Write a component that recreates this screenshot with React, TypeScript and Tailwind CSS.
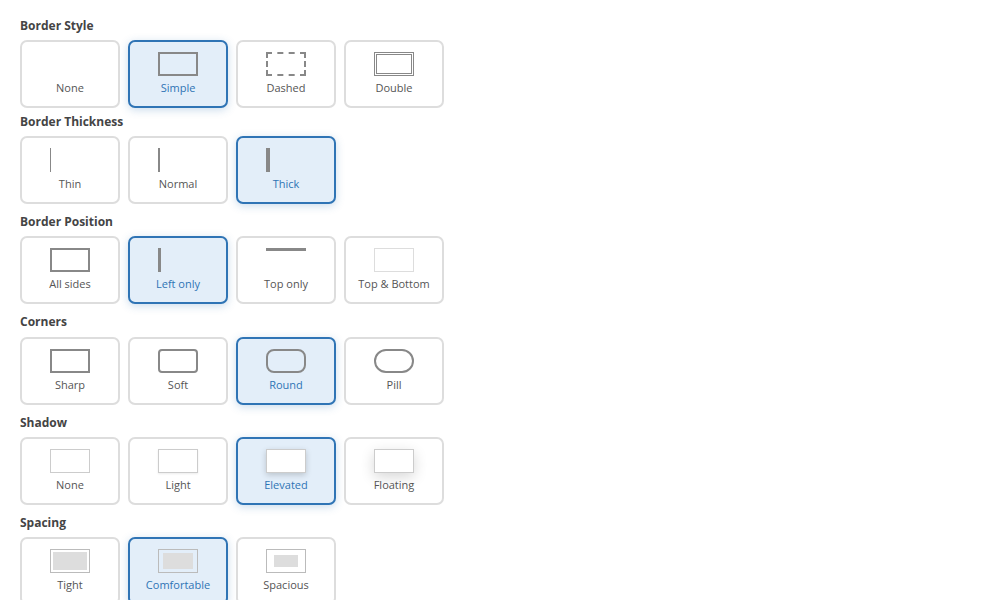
import React from "react";

type Opt = { label: string; icon: React.ReactNode; selected?: boolean };

const box = "w-[40px] h-[24px] box-border";

function Card({ o }: { o: Opt }) {
  return (
    <div
      className={
        "w-[100px] h-[68px] box-border rounded-[7px] border-2 flex flex-col items-center pt-[10px] " +
        (o.selected
          ? "border-[#2f74b5] bg-[#e3eef9] shadow-[0_2px_9px_rgba(47,116,181,0.25)]"
          : "border-[#dddddd] bg-white")
      }
    >
      <div className="w-[40px] h-[24px] flex">{o.icon}</div>
      <div
        className={
          "mt-[4px] text-[11px] leading-[16px] " +
          (o.selected ? "text-[#2f74b5]" : "text-[#555555]")
        }
      >
        {o.label}
      </div>
    </div>
  );
}

function Section({
  title,
  opts,
  className,
  gapClass,
}: {
  title: string;
  opts: Opt[];
  className: string;
  gapClass: string;
}) {
  return (
    <div className={className}>
      <div className="text-[12px] leading-[16px] font-bold text-[#444444]">{title}</div>
      <div className={gapClass + " flex gap-[8px]"}>
        {opts.map((o) => (
          <Card key={o.label} o={o} />
        ))}
      </div>
    </div>
  );
}

export default function App() {
  const sections: { title: string; opts: Opt[] }[] = [
    {
      title: "Border Style",
      opts: [
        { label: "None", icon: <div className={box} /> },
        { label: "Simple", selected: true, icon: <div className={box + " border-2 border-[#888888]"} /> },
        { label: "Dashed", icon: <div className={box + " border-2 border-dashed border-[#888888]"} /> },
        { label: "Double", icon: <div className={box + " border-[3px] border-double border-[#888888]"} /> },
      ],
    },
    {
      title: "Border Thickness",
      opts: [
        { label: "Thin", icon: <div className="w-[1px] h-[24px] bg-[#888888]" /> },
        { label: "Normal", icon: <div className="w-[2px] h-[24px] bg-[#888888]" /> },
        { label: "Thick", selected: true, icon: <div className="w-[4px] h-[24px] bg-[#888888]" /> },
      ],
    },
    {
      title: "Border Position",
      opts: [
        { label: "All sides", icon: <div className={box + " border-2 border-[#888888]"} /> },
        { label: "Left only", selected: true, icon: <div className={box + " border-l-[3px] border-[#888888]"} /> },
        { label: "Top only", icon: <div className={box + " border-t-[3px] border-[#888888]"} /> },
        { label: "Top & Bottom", icon: <div className={box + " border border-[#dddddd]"} /> },
      ],
    },
    {
      title: "Corners",
      opts: [
        { label: "Sharp", icon: <div className={box + " border-2 border-[#888888]"} /> },
        { label: "Soft", icon: <div className={box + " border-2 border-[#888888] rounded-[4px]"} /> },
        { label: "Round", selected: true, icon: <div className={box + " border-2 border-[#888888] rounded-[8px]"} /> },
        { label: "Pill", icon: <div className={box + " border-2 border-[#888888] rounded-[12px]"} /> },
      ],
    },
    {
      title: "Shadow",
      opts: [
        { label: "None", icon: <div className={box + " border border-[#cccccc] bg-white"} /> },
        { label: "Light", icon: <div className={box + " border border-[#cccccc] bg-white shadow-[0_1px_2px_rgba(0,0,0,0.08)]"} /> },
        { label: "Elevated", selected: true, icon: <div className={box + " border border-[#cccccc] bg-white shadow-[0_2px_6px_rgba(0,0,0,0.18)]"} /> },
        { label: "Floating", icon: <div className={box + " border border-[#cccccc] bg-white shadow-[0_4px_14px_rgba(0,0,0,0.16)]"} /> },
      ],
    },
    {
      title: "Spacing",
      opts: [
        { label: "Tight", icon: <div className={box + " border border-[#bbbbbb] p-[2px] flex"}><div className="flex-1 bg-[#dddddd]" /></div> },
        { label: "Comfortable", selected: true, icon: <div className={box + " border border-[#bbbbbb] px-[4px] py-[3px] flex"}><div className="flex-1 bg-[#dddddd]" /></div> },
        { label: "Spacious", icon: <div className={box + " border border-[#bbbbbb] px-[7px] py-[5px] flex"}><div className="flex-1 bg-[#dddddd]" /></div> },
      ],
    },
  ];
  return (
    <div className="w-[1002px] h-[600px] overflow-hidden bg-white pl-[20px] pt-[18px] font-['Open_Sans',sans-serif]">
      {sections.map((s, i) => (
        <Section
          key={s.title}
          title={s.title}
          opts={s.opts}
          className={i === 0 ? "" : i === 1 ? "mt-[6px]" : "mt-[10px]"}
          gapClass={i === 3 ? "mt-[7px]" : "mt-[6px]"}
        />
      ))}
    </div>
  );
}
